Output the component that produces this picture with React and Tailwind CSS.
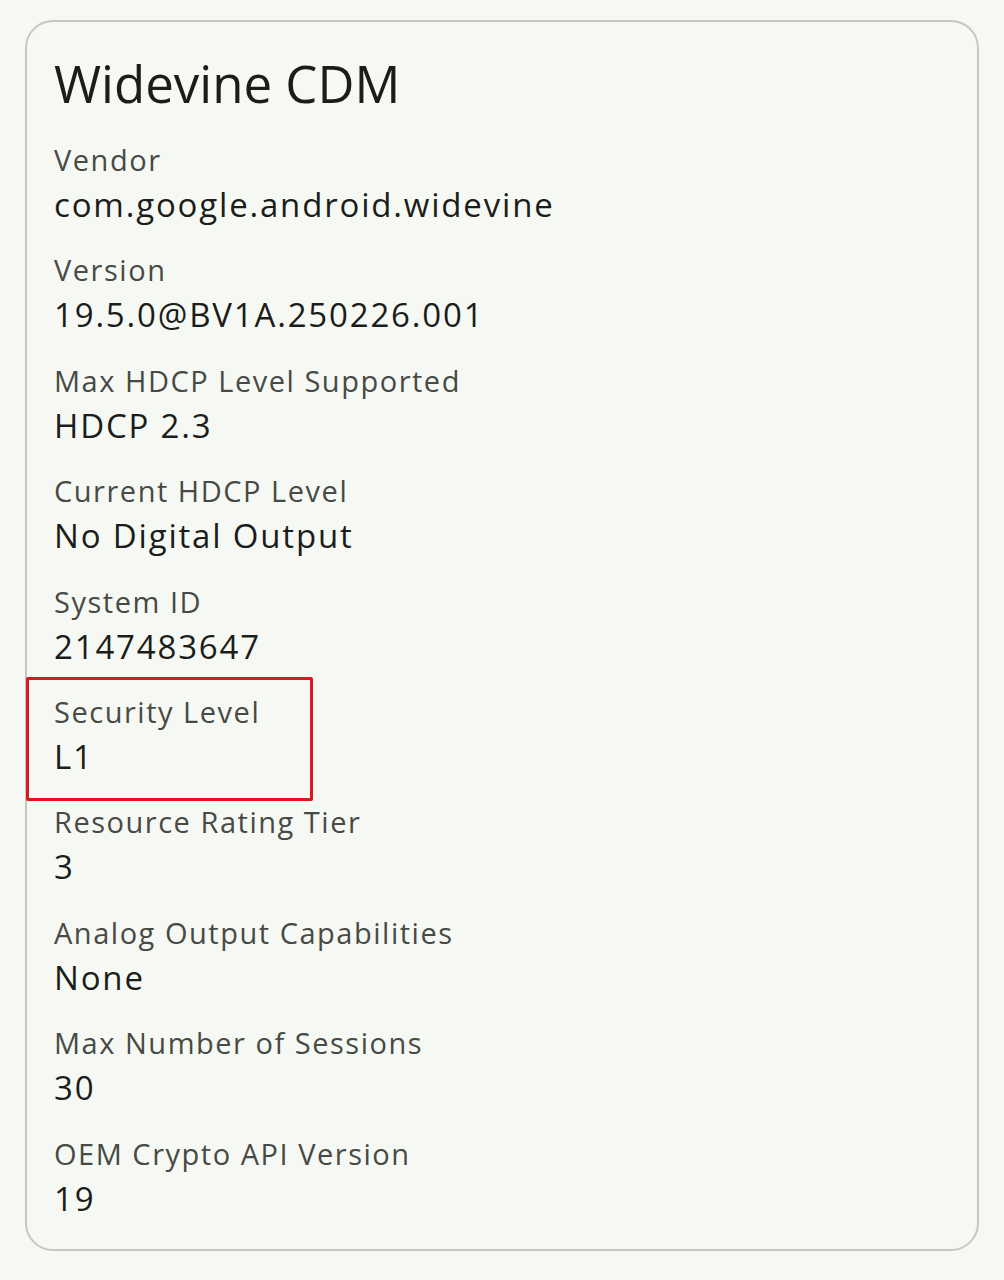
const rows = [
  ['Vendor', 'com.google.android.widevine'],
  ['Version', '19.5.0@BV1A.250226.001'],
  ['Max HDCP Level Supported', 'HDCP 2.3'],
  ['Current HDCP Level', 'No Digital Output'],
  ['System ID', '2147483647'],
  ['Security Level', 'L1'],
  ['Resource Rating Tier', '3'],
  ['Analog Output Capabilities', 'None'],
  ['Max Number of Sessions', '30'],
  ['OEM Crypto API Version', '19'],
];

export default function App() {
  return (
    <div
      className="relative w-[1004px] h-[1280px] bg-[#f6f9f3] pt-[20px] pl-[25px]"
      style={{ fontFamily: '"Open Sans", "Noto Sans", sans-serif' }}
    >
      {/* Karte */}
      <div className="w-[954px] h-[1231px] rounded-[28px] border-2 border-[#c5c8c1] pl-[27px] pt-[31px]">
        <h1 className="text-[51px] leading-[60px] text-[#1b1d1a] mb-[27px]">Widevine CDM</h1>
        <div className="flex flex-col gap-[20.4px]">
          {rows.map(([label, value]) => (
            <div key={label} className="flex flex-col">
              <div className="text-[29px] leading-[40px] text-[#474a45] tracking-[1.52px]">{label}</div>
              <div className="text-[33px] leading-[50px] text-[#1b1d1a] tracking-[1.82px]">{value}</div>
            </div>
          ))}
        </div>
      </div>

      {/* Markierung */}
      <div className="absolute left-[26px] top-[677px] w-[287px] h-[124px] border-[3px] border-[#e0161e] rounded-[2px]" />
    </div>
  );
}
